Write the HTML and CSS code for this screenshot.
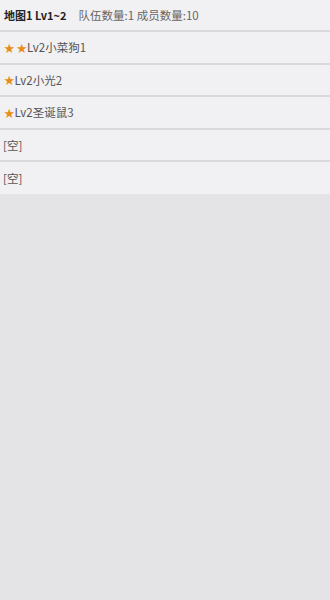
FILE: index.html
```html
<!DOCTYPE html>
<html>
<head>
  <meta charset="UTF-8">
  <title>队伍</title>
  <link rel="stylesheet" href="styles.css">
</head>
<body>
  <div class="team-list">
    <div class="row head">
      <span class="map-name">地图1 Lv1~2</span>
      <span class="count">队伍数量:1 成员数量:10</span>
    </div>
    <div class="row"><span class="star">★</span><span class="star">★</span>Lv2小菜狗1</div>
    <div class="row"><span class="star">★</span>Lv2小光2</div>
    <div class="row"><span class="star">★</span>Lv2圣诞鼠3</div>
    <div class="row empty">[空]</div>
    <div class="row empty">[空]</div>
  </div>
</body>
</html>
```

FILE: styles.css
```css
html, body { margin: 0; padding: 0; }
body {
  font-family: "Noto Sans CJK SC", "Noto Sans", sans-serif;
  font-size: 11.5px;
  color: #555;
  background: #e4e3e6;
  height: 600px;
}
.team-list { background: #f1f0f3; }
.row {
  display: flex;
  align-items: center;
  height: 30.5px;
  padding: 0 4px;
  border-bottom: 2px solid #d9d8dc;
}
.row:last-child { height: 32px; border-bottom: none; }
.head { height: 30px; }
.map-name { font-weight: bold; color: #222; font-size: 11px; margin-right: 12px; }
.count { color: #666; }
.star { color: #e88d14; font-size: 10.5px; }
.star + .star { margin-left: 2px; }
.empty { padding-left: 3px; }
```
